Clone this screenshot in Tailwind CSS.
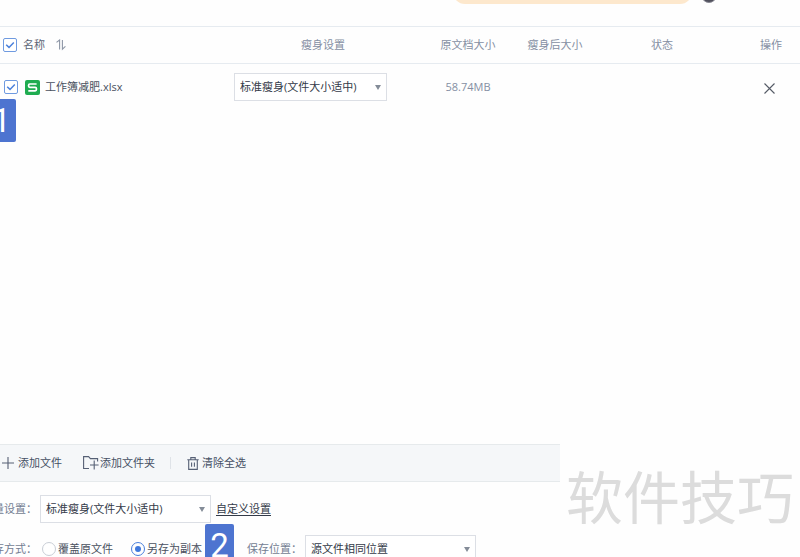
<!DOCTYPE html>
<html lang="zh-CN">
<head>
    <meta charset="UTF-8">
    <meta name="viewport" content="width=device-width, initial-scale=1.0">
    <title>文档瘦身</title>
    <script src="https://cdn.jsdelivr.net/npm/@tailwindcss/browser@4"></script>
</head>
<body class="relative flex h-screen flex-col overflow-hidden bg-[#fefefe] font-['Open_Sans','Noto_Sans_CJK_SC',sans-serif] text-[11px] leading-4 text-[#4a5160]">
    <!-- Title bar -->
    <header class="flex h-[27px] items-start justify-end gap-[9px] border-b border-[#e6ebf0] pr-[83px]">
        <div class="-mt-5 h-6 w-[239px] rounded-full bg-[#fde8cd]"></div>
        <div class="-mt-[13px] size-4 rounded-full border border-[#8a8a94] bg-[#50505c]"></div>
    </header>

    <!-- File list -->
    <main class="flex-1">
        <table class="w-full table-fixed">
            <colgroup>
                <col class="w-[234px]">
                <col class="w-[178px]">
                <col class="w-[112px]">
                <col class="w-[62px]">
                <col>
                <col class="w-[62px]">
            </colgroup>
            <thead>
                <tr class="h-9 border-b border-[#e6ebf0] text-[#858fa3]">
                    <th class="p-0 font-normal text-[#5b6475]">
                        <div class="flex items-center pl-[3px]">
                            <label class="flex items-center gap-[6px]">
                                <span class="grid size-[14px]">
                                    <input type="checkbox" checked aria-label="全选" class="col-start-1 row-start-1 size-[14px] appearance-none rounded-xs border border-[#6f9ae0] bg-white">
                                    <svg class="pointer-events-none col-start-1 row-start-1 size-[14px]" viewBox="0 0 14 14" fill="none" stroke="#4a80dc" stroke-width="1.5"><path d="M3.2 6.8 6 9.4 10.8 4.4"/></svg>
                                </span>
                                <span>名称</span>
                            </label>
                            <button type="button" aria-label="排序" class="ml-[11px]">
                                <svg class="h-[12px] w-[10px]" viewBox="0 0 10 12" fill="none" stroke="#8d96a6" stroke-width="1.1"><path d="M.5 3.4 3.6 1v9.5M6.4 1v9.2L9.4 7.4"/></svg>
                            </button>
                        </div>
                    </th>
                    <th class="p-0 font-normal">瘦身设置</th>
                    <th class="p-0 font-normal">原文档大小</th>
                    <th class="p-0 font-normal">瘦身后大小</th>
                    <th class="p-0 font-normal">状态</th>
                    <th class="p-0 pl-1 font-normal">操作</th>
                </tr>
            </thead>
            <tbody>
                <tr class="h-12">
                    <td class="p-0">
                        <label class="flex items-center pl-1">
                            <span class="grid size-[14px]">
                                <input type="checkbox" checked class="col-start-1 row-start-1 size-[14px] appearance-none rounded-xs border border-[#6f9ae0] bg-white">
                                <svg class="pointer-events-none col-start-1 row-start-1 size-[14px]" viewBox="0 0 14 14" fill="none" stroke="#4a80dc" stroke-width="1.5"><path d="M3.2 6.8 6 9.4 10.8 4.4"/></svg>
                            </span>
                            <svg class="ml-[7px] size-[15px]" viewBox="0 0 15 15"><rect width="15" height="15" rx="2" fill="#1fac50"/><path d="M11.6 4H4.8Q3.6 4 3.6 5.2V6q0 1.3 1.2 1.3h5.4q1.2 0 1.2 1.3v1q0 1.3-1.2 1.3H3.3" fill="none" stroke="#fff" stroke-width="1.7"/></svg>
                            <span class="ml-[5px]">工作簿减肥.xlsx</span>
                        </label>
                    </td>
                    <td class="p-0">
                        <div class="grid w-[153px] items-center">
                            <select aria-label="瘦身设置" class="col-start-1 row-start-1 h-7 w-full appearance-none border border-[#dcdfe5] bg-white px-[5px] text-[#333a48]">
                                <option>标准瘦身(文件大小适中)</option>
                            </select>
                            <svg class="pointer-events-none col-start-1 row-start-1 mr-[6px] h-[5px] w-[6px] justify-self-end" viewBox="0 0 6 5"><path d="M0 0h6L3 5z" fill="#848c98"/></svg>
                        </div>
                    </td>
                    <td class="p-0 text-center text-[#858fa3]">58.74MB</td>
                    <td class="p-0"></td>
                    <td class="p-0"></td>
                    <td class="p-0 text-center">
                        <button type="button" aria-label="移除" class="align-middle">
                            <svg class="size-[11px]" viewBox="0 0 11 11" fill="none" stroke="#555b66" stroke-width="1.1"><path d="M.5.5l10 10M10.5.5l-10 10"/></svg>
                        </button>
                    </td>
                </tr>
            </tbody>
        </table>
    </main>

    <!-- Bottom panel -->
    <footer class="-mb-[6px]">
        <div class="flex h-[38px] w-[70%] items-center border-y border-[#e6eaec] bg-[#f5f7f9] pl-[2px] text-[#465064]">
            <button type="button" class="flex items-center gap-1">
                <svg class="size-3" viewBox="0 0 12 12" fill="none" stroke="#566075" stroke-width="1.1"><path d="M6 0v12M0 6h12"/></svg>
                <span>添加文件</span>
            </button>
            <button type="button" class="ml-[21px] flex items-center gap-[1px]">
                <svg class="h-[14px] w-4" viewBox="0 0 16 14" fill="none" stroke="#566075" stroke-width="1.1"><path d="M6 12.5H.6V.6h5l1.8 2h7.2v2.8M11.2 4.5v9M7 9h8.6"/></svg>
                <span>添加文件夹</span>
            </button>
            <span class="ml-[15px] h-3 w-px bg-[#dfe3e8]"></span>
            <button type="button" class="ml-4 flex items-center gap-[3px]">
                <svg class="h-[13px] w-[12px]" viewBox="0 0 12 13" fill="none" stroke="#566075" stroke-width="1.1"><path d="M.3 2.7h11.4M3.8 2.5V.6h4.4v1.9M1.7 2.7v9.7h8.6V2.7M4.6 5.5v4.3M7.4 5.5v4.3"/></svg>
                <span>清除全选</span>
            </button>
        </div>
        <form class="-ml-[18px] flex flex-col gap-3 pt-[13px]">
            <div class="flex items-center">
                <label for="batch" class="w-[58px] shrink-0 text-[#737d92]">批量设置：</label>
                <div class="grid w-[171px] items-center">
                    <select id="batch" class="col-start-1 row-start-1 h-7 w-full appearance-none border border-[#dcdfe5] bg-white px-[5px] text-[#333a48]">
                        <option>标准瘦身(文件大小适中)</option>
                    </select>
                    <svg class="pointer-events-none col-start-1 row-start-1 mr-[6px] h-[5px] w-[6px] justify-self-end" viewBox="0 0 6 5"><path d="M0 0h6L3 5z" fill="#848c98"/></svg>
                </div>
                <a href="#" class="ml-[5px] text-[#333a48] underline underline-offset-2">自定义设置</a>
            </div>
            <div class="flex items-center">
                <span class="w-[60px] shrink-0 text-[#737d92]">保存方式：</span>
                <label class="flex items-center gap-[2px]">
                    <input type="radio" name="mode" class="size-[14px] appearance-none rounded-full border border-[#c9ced6] bg-white">
                    <span>覆盖原文件</span>
                </label>
                <label class="ml-[18px] flex items-center gap-[2px]">
                    <input type="radio" name="mode" checked class="size-[14px] appearance-none rounded-full border border-[#4a80dc] bg-[#3f78dc] bg-clip-content p-[3px]">
                    <span>另存为副本</span>
                </label>
                <label for="place" class="ml-[45px] w-[58px] shrink-0 text-[#737d92]">保存位置：</label>
                <div class="grid w-[171px] items-center">
                    <select id="place" class="col-start-1 row-start-1 h-7 w-full appearance-none border border-[#dcdfe5] bg-white px-[5px] text-[#333a48]">
                        <option>源文件相同位置</option>
                    </select>
                    <svg class="pointer-events-none col-start-1 row-start-1 mr-[6px] h-[5px] w-[6px] justify-self-end" viewBox="0 0 6 5"><path d="M0 0h6L3 5z" fill="#848c98"/></svg>
                </div>
            </div>
        </form>
    </footer>

    <!-- Step markers and watermark -->
    <div class="absolute top-[99px] -left-[13px] flex h-[43px] w-[29px] items-center justify-center rounded-xs bg-[#4d74d0] font-['Roboto',sans-serif] text-[33px] text-white">1</div>
    <div class="absolute -bottom-[10px] left-[205px] flex h-[43px] w-[29px] items-center justify-center rounded-xs bg-[#4d74d0] font-['Roboto',sans-serif] text-[33px] text-white">2</div>
    <div class="pointer-events-none absolute right-[6px] bottom-[31px] text-[57px] leading-[57px] text-[#dcdcdc]">软件技巧</div>
</body>
</html>
